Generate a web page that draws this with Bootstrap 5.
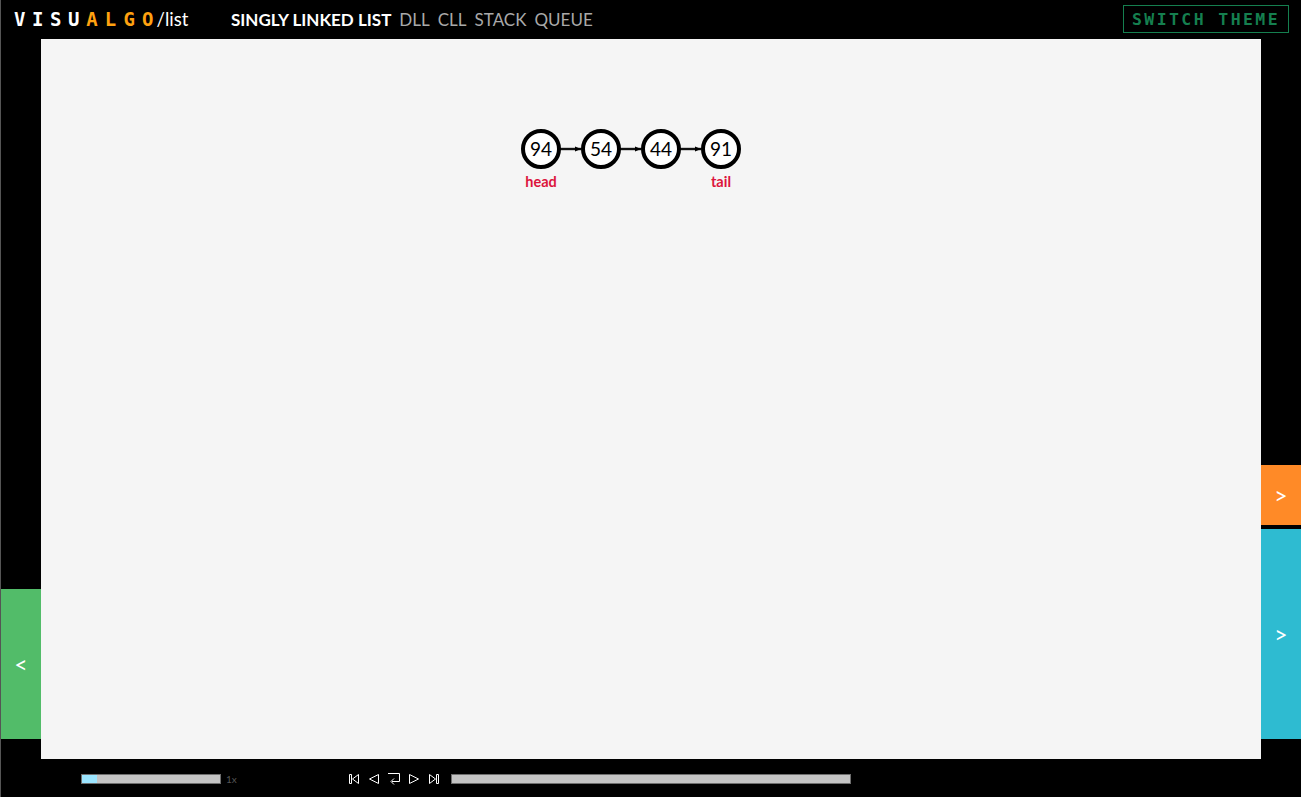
<!DOCTYPE html>
<html lang="en">
<head>
<meta charset="utf-8">
<title>VisuAlgo - Linked List</title>
<link href="https://cdn.jsdelivr.net/npm/bootstrap@5.3.0/dist/css/bootstrap.min.css" rel="stylesheet">
<style>
html,body{height:100%}
body{background:#000;overflow:hidden;font-family:Lato,"Liberation Sans",sans-serif;position:relative;border-left:1px solid #555}
.topbar{height:39px}
.brand-logo{font-family:"DejaVu Sans Mono","Liberation Mono",monospace;font-weight:700;font-size:19px;letter-spacing:6.6px;width:217px;margin-left:13px;color:#fff;line-height:39px;white-space:nowrap}
.brand-logo .algo{color:#ffa210;letter-spacing:7.2px}
.brand-logo .algo-end{letter-spacing:3px}
.brand-logo .sub{font-family:Lato,sans-serif;font-weight:400;font-size:18.5px;letter-spacing:0}
.tab-active,.tab-plain{font-size:17px;line-height:39px;white-space:nowrap}
.tab-active{color:#fff;font-weight:700}
.tab-plain{color:#a9a9a9;font-weight:400}
.theme-switch{font-family:"DejaVu Sans Mono","Liberation Mono",monospace;font-weight:700;font-size:16.5px;letter-spacing:2.4px;color:#157f4f;border:1px solid #157f4f;border-radius:0;background:transparent;width:166px;height:28px;padding:1px 0 0;margin-right:12px;margin-top:-1px;line-height:26px;white-space:nowrap}
.stage-row{height:720px}
.stage-gutter{width:40px}
.stage-canvas{width:1220px;height:720px;background:#f5f5f5}
.stage-canvas svg{display:block}
.node-ring{fill:#fff;stroke:#000;stroke-width:4}
.node-link{stroke:#111;stroke-width:2.4}
.node-value{font-family:Lato,sans-serif;font-size:19px;fill:#000;text-anchor:middle}
.node-tag{font-family:Lato,sans-serif;font-size:14.5px;font-weight:700;fill:#dc143c;text-anchor:middle}
.side-tab{position:absolute;display:flex;align-items:center;justify-content:center;width:40px;color:#fff;font-size:23px}
.tab-exit{left:0;top:589px;height:150px;background:#52bc69}
.tab-action{left:1260px;top:465px;height:60px;background:#ff8a27}
.tab-status{left:1260px;top:529px;height:210px;background:#2ebbd1}
.player{height:38px;padding-top:2px}
.speed-track{margin-left:80px;width:140px;height:10px;background:#c4c4c4;border:1px solid #6e6e6e}
.speed-fill{width:15px;height:100%;background:#9be5ff}
.speed-label{font-size:10px;color:#555;width:122px;margin-left:5px}
.player-icons{width:103px;gap:8px}
.return-icon{margin:0 -1px}
.progress-track{width:400px;height:10px;background:#c4c4c4;border:1px solid #6e6e6e}
.player-icons svg{display:block;fill:none;stroke:#fff;stroke-width:1}
</style>
</head>
<body>
<header class="topbar d-flex align-items-center">
  <div class="brand-logo flex-shrink-0">VISU<span class="algo">ALG<span class="algo-end">O</span></span><span class="sub">/list</span></div>
  <nav class="d-flex gap-2 flex-grow-1">
    <span class="tab-active">SINGLY LINKED LIST</span>
    <span class="tab-plain">DLL</span>
    <span class="tab-plain">CLL</span>
    <span class="tab-plain">STACK</span>
    <span class="tab-plain">QUEUE</span>
  </nav>
  <button type="button" class="btn theme-switch">SWITCH THEME</button>
</header>
<main class="stage-row d-flex">
  <div class="stage-gutter flex-shrink-0"></div>
  <div class="stage-canvas flex-shrink-0">
    <svg width="1220" height="720" viewBox="41 39 1220 720">
      <defs><marker id="arrowhead" markerUnits="userSpaceOnUse" markerWidth="7" markerHeight="7" refX="6" refY="3.5" orient="auto"><path d="M0 1L6 3.500L0 6z" fill="#000"/></marker></defs>
      <line class="node-link" x1="559" y1="149" x2="581" y2="149" marker-end="url(#arrowhead)"/>
      <line class="node-link" x1="619" y1="149" x2="641" y2="149" marker-end="url(#arrowhead)"/>
      <line class="node-link" x1="679" y1="149" x2="701" y2="149" marker-end="url(#arrowhead)"/>
      <circle class="node-ring" cx="541" cy="149" r="18"/>
      <circle class="node-ring" cx="601" cy="149" r="18"/>
      <circle class="node-ring" cx="661" cy="149" r="18"/>
      <circle class="node-ring" cx="721" cy="149" r="18"/>
      <text class="node-value" x="541" y="156">94</text>
      <text class="node-value" x="601" y="156">54</text>
      <text class="node-value" x="661" y="156">44</text>
      <text class="node-value" x="721" y="156">91</text>
      <text class="node-tag" x="541" y="187">head</text>
      <text class="node-tag" x="721" y="187">tail</text>
    </svg>
  </div>
</main>
<div class="side-tab tab-exit">&lt;</div>
<div class="side-tab tab-action">&gt;</div>
<div class="side-tab tab-status">&gt;</div>
<footer class="player d-flex align-items-center">
  <div class="speed-track flex-shrink-0"><div class="speed-fill"></div></div>
  <div class="speed-label flex-shrink-0">1x</div>
  <div class="player-icons d-flex align-items-center flex-shrink-0">
    <svg width="12" height="12" viewBox="0 0 12 12"><path d="M1.500 1.500h2v9h-2zM10.500 1.500L4.500 6l6 4.500z"/></svg>
    <svg width="12" height="12" viewBox="0 0 12 12"><path d="M10.500 1.500L1.500 6l9 4.500z"/></svg>
    <svg class="return-icon" width="14" height="14" viewBox="0 0 14 14"><path d="M1 1.500h11.500v8H5M7 6.500L4 9.500l3 3"/></svg>
    <svg width="12" height="12" viewBox="0 0 12 12"><path d="M1.500 1.500L10.500 6l-9 4.500z"/></svg>
    <svg width="12" height="12" viewBox="0 0 12 12"><path d="M1.500 1.500L7.500 6l-6 4.500zM8.500 1.500h2v9h-2z"/></svg>
  </div>
  <div class="progress-track flex-shrink-0"></div>
</footer>
</body>
</html>
